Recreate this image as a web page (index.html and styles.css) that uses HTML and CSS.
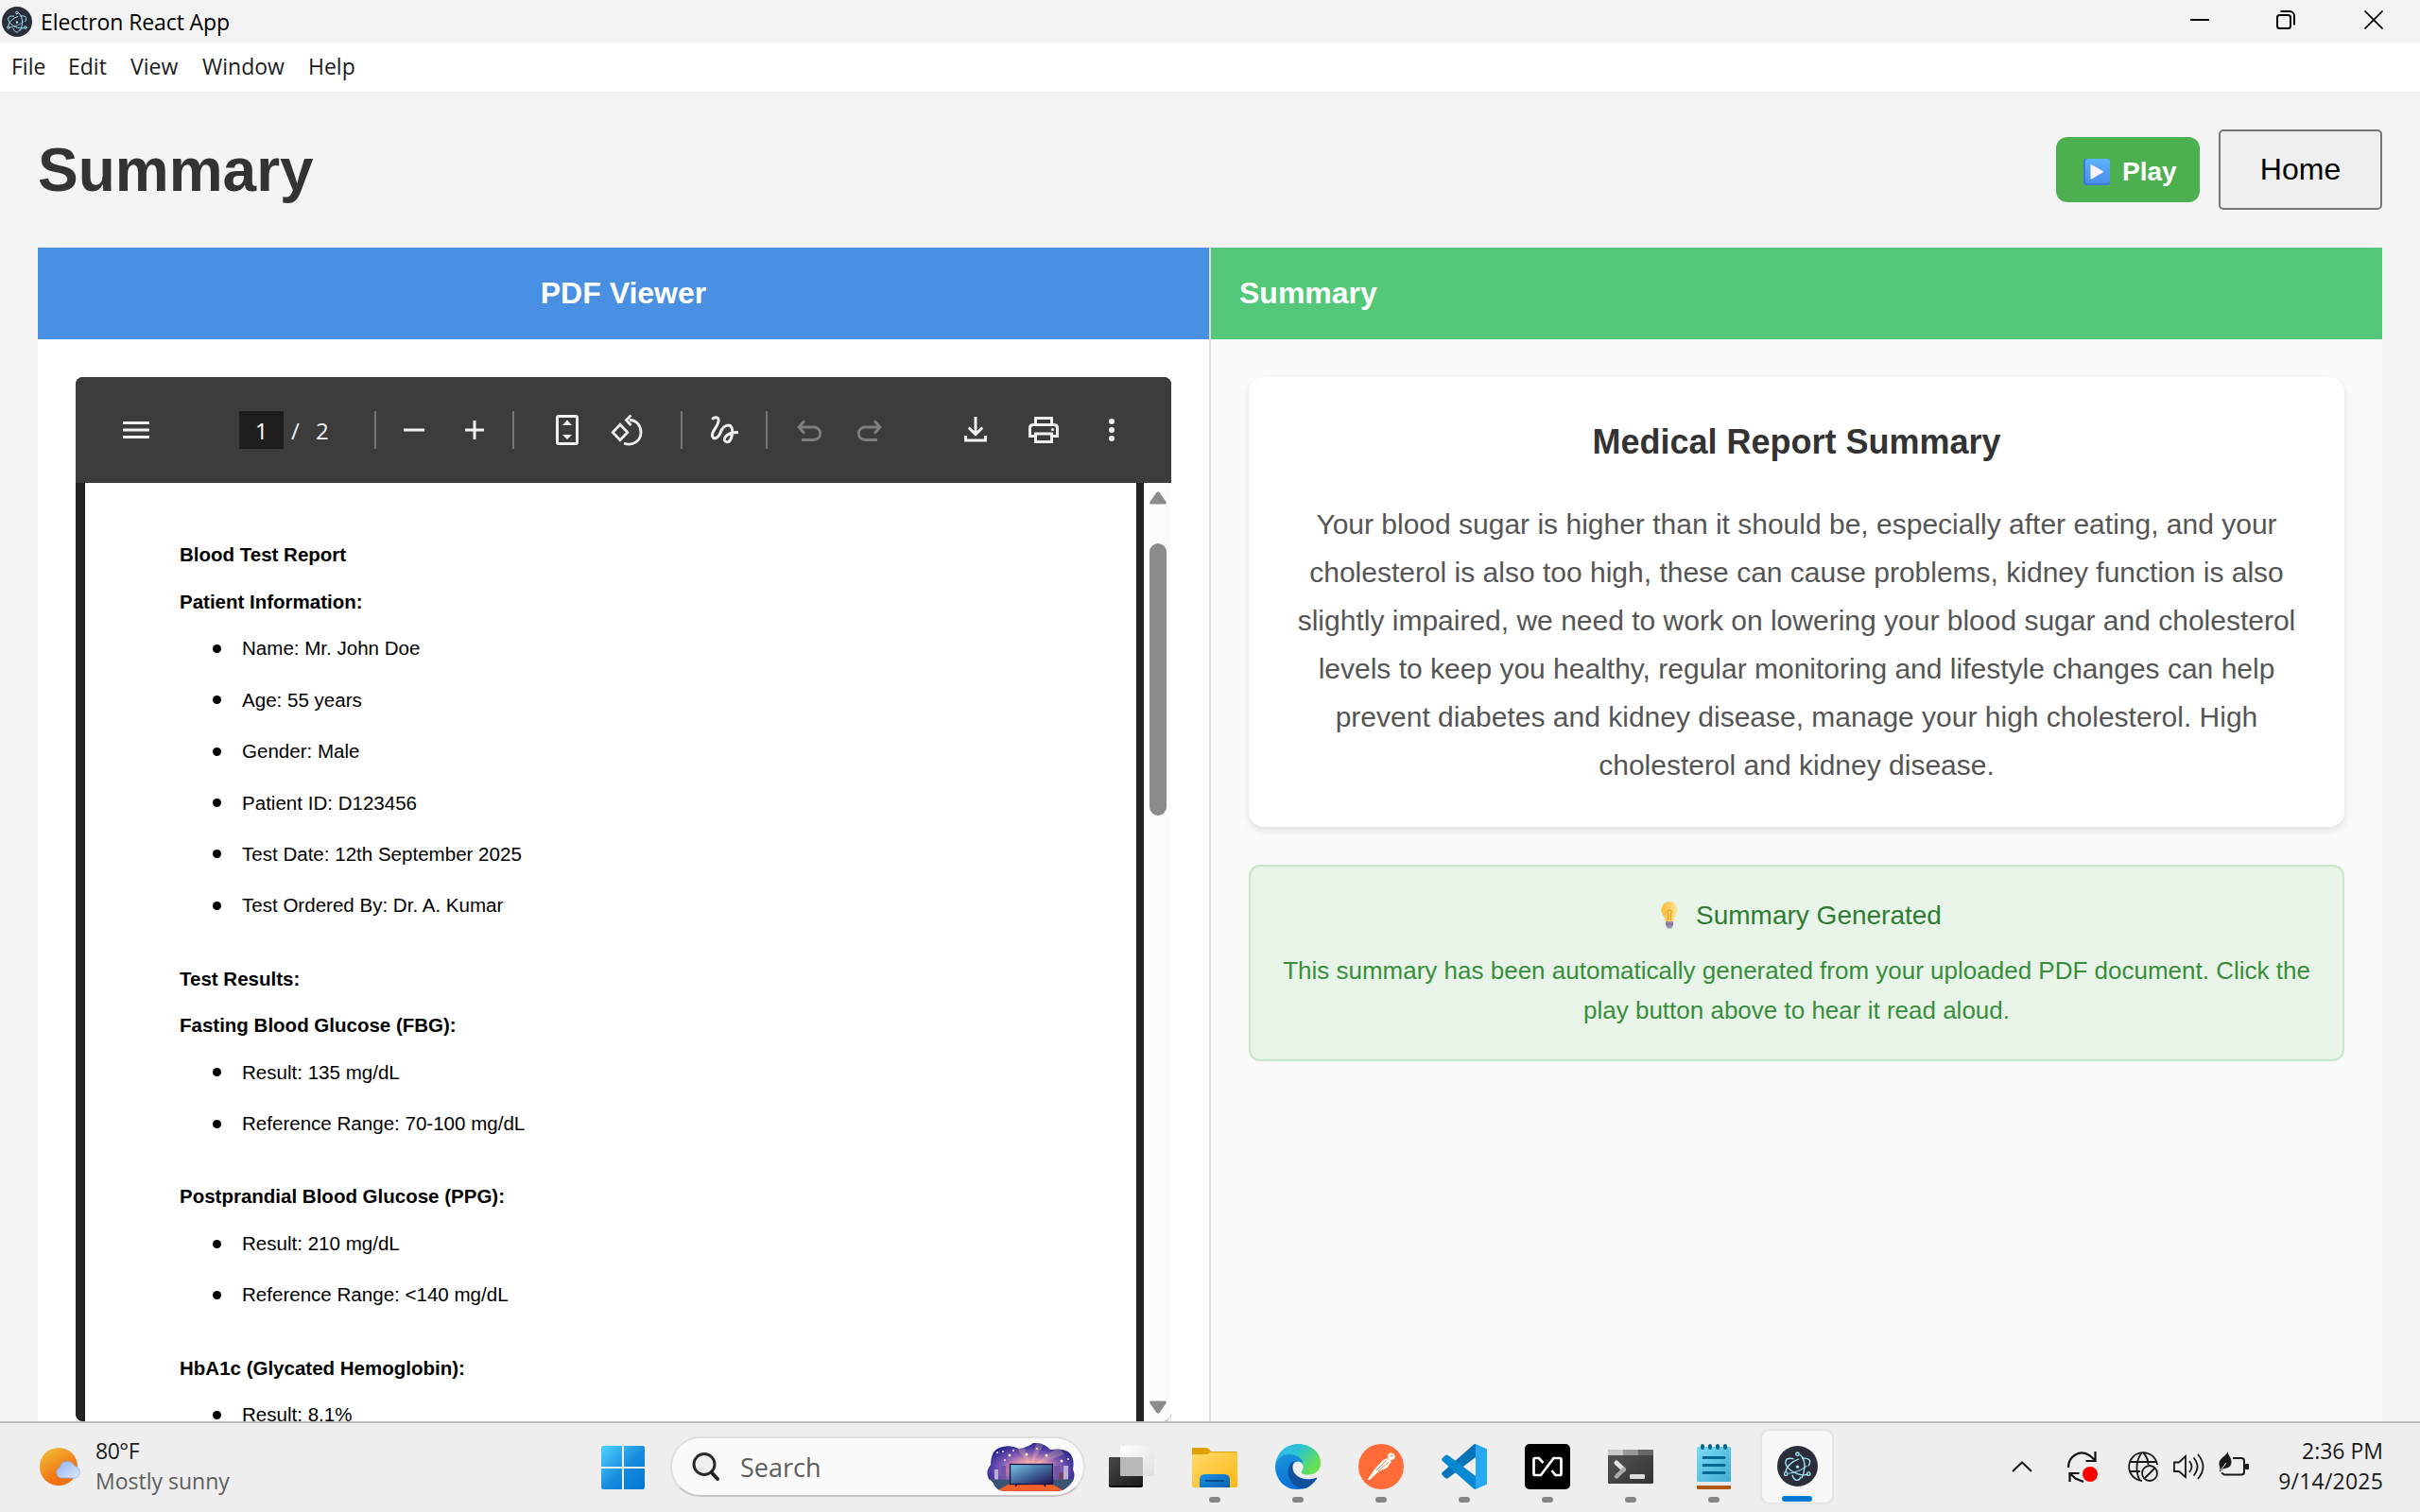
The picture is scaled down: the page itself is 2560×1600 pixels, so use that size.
FILE: index.html
```html
<!DOCTYPE html>
<html lang="en">
<head>
<meta charset="utf-8">
<title>Electron React App</title>
<link rel="stylesheet" href="styles.css">
</head>
<body>
<svg width="0" height="0" class="defs" aria-hidden="true">
  <defs>
    <symbol id="electron" viewBox="0 0 42 42">
      <circle cx="21" cy="21" r="21" fill="#2b2e3a"/>
      <g fill="none" stroke="#9feaf9" stroke-width="1.3" stroke-linecap="round">
        <path d="M24 9.5C27 12 28.5 17 28.2 22.500C28 27 27.200 30 25.500 33M24.200 32.500C22.500 37 17.500 36.500 15.800 30.500"/>
        <path d="M8.800 26.800C9.500 21 16 15.800 22 13.800M26 13C32 12.200 36 14.500 32.500 20.500" />
        <path d="M31.500 29.500C26 31.500 17 28.500 12.200 23.800C6.500 18 7.500 11.500 16.500 13.300"/>
        <path d="M11.800 28.500C17.500 28 26 25 30.300 20.800" stroke-opacity=".75"/>
        <circle cx="21" cy="8.500" r="1.700"/><circle cx="9" cy="29" r="1.700"/><circle cx="32.500" cy="29" r="1.700"/>
      </g>
      <circle cx="21" cy="21.700" r="1.600" fill="#9feaf9"/>
    </symbol>
  </defs>
</svg>

<header class="titlebar">
  <svg class="app-icon" width="32" height="32"><use href="#electron"/></svg>
  <span class="app-name">Electron React App</span>
  <div class="window-controls">
    <svg width="20" height="20"><path d="M0 10h20" stroke="#000" stroke-width="2"/></svg>
    <svg width="20" height="20" fill="none" stroke="#000" stroke-width="2"><rect x="1" y="5" width="14" height="14" rx="2.500"/><path d="M4.500 1H14a5 5 0 0 1 5 5v9.500"/></svg>
    <svg width="20" height="20"><path d="M.5.5l19 19M19.500.5l-19 19" stroke="#000" stroke-width="1.700"/></svg>
  </div>
</header>
<nav class="menubar">
  <span class="m-file">File</span><span class="m-edit">Edit</span><span class="m-view">View</span><span class="m-window">Window</span><span class="m-help">Help</span>
</nav>

<main class="app">
  <div class="page-head">
    <h1>Summary</h1>
    <div class="actions">
      <button class="play">
        <svg width="28" height="28" viewBox="0 0 28 28"><defs><linearGradient id="pl" x2="0" y2="1"><stop stop-color="#5cb4fb"/><stop offset="1" stop-color="#4b8fe8"/></linearGradient></defs><rect width="28" height="28" rx="3" fill="#3f78dd"/><rect x="2" y="0" width="26" height="26" rx="3" fill="url(#pl)"/><path d="M7.500 6.800q0-1 1-.6L20.500 13q1 .8 0 1.600L8.500 21.500q-1 .4-1-.6z" fill="#fdf0ff"/></svg>
        <span>Play</span>
      </button>
      <button class="home">Home</button>
    </div>
  </div>

  <div class="panels">
    <section class="panel pdf-panel">
      <h2 class="panel-title blue">PDF Viewer</h2>
      <div class="panel-body">
        <div class="viewer">
          <div class="toolbar">
            <svg class="t-menu" width="40" height="40"><path d="M6 12.500h28M6 20h28M6 27.500h28" stroke="#f1f1f1" stroke-width="3"/></svg>
            <span class="page-input">1</span><span class="page-slash">/</span><span class="page-total">2</span>
            <i class="sep s1"></i>
            <svg class="t-minus" width="40" height="40"><path d="M9 20h22" stroke="#f1f1f1" stroke-width="3"/></svg>
            <svg class="t-plus" width="40" height="40"><path d="M10 20h20M20 10v20" stroke="#f1f1f1" stroke-width="3"/></svg>
            <i class="sep s2"></i>
            <svg class="t-fit" width="40" height="40"><rect x="9.500" y="5.500" width="21" height="29" rx="1.500" fill="none" stroke="#f1f1f1" stroke-width="3"/><path d="M15 15l5-5.500 5 5.500zM15 25l5 5 5-5z" fill="#f1f1f1"/></svg>
            <svg class="t-rot" width="40" height="40"><g fill="none" stroke="#f1f1f1" stroke-width="2.800"><path d="M5.200 22.500L13 14.300l7.800 8.200L13 30.700z"/><path d="M23 9.500c8 .2 12 6.500 12 13 0 9-8.500 15-18 11.500M24.500 4.500l-5 5 5 5.500"/></g></svg>
            <i class="sep s3"></i>
            <svg class="t-draw" width="40" height="40"><path d="M7.500 9C9 6 15 5.500 14 11C13 17 7 21 7.500 26C8 31 14 29 16.500 22C19 15 26 13 28 17.500C30 23 27.500 33 23 32.800C17.500 32 20 22.500 35 22.500" fill="none" stroke="#f1f1f1" stroke-width="3"/></svg>
            <i class="sep s4"></i>
            <svg class="t-undo" width="40" height="40"><path d="M15 10.500l-6 6.500 6 6.500M9.500 17H25a6.500 6.500 0 0 1 0 13.500H12" fill="none" stroke="#7f7f7f" stroke-width="2.800"/></svg>
            <svg class="t-redo" width="40" height="40"><path d="M25 10.500l6 6.500-6 6.500M30.500 17H15a6.500 6.500 0 0 0 0 13.500H28" fill="none" stroke="#7f7f7f" stroke-width="2.800"/></svg>
            <svg class="t-down" width="40" height="40"><path d="M20 6v18M12.800 17.500l7.200 7.200 7.200-7.200M9.500 26v5h21v-5" fill="none" stroke="#f1f1f1" stroke-width="3"/></svg>
            <svg class="t-print" width="40" height="40"><g fill="none" stroke="#f1f1f1" stroke-width="3"><path d="M11.500 14V7.500h17V14M10.500 26.500h-5V18q0-3.500 3.500-3.500h22q3.500 0 3.500 3.500v8.500h-5"/><path d="M11.500 24h17v8.500h-17z"/></g><circle cx="29.500" cy="19.500" r="1.600" fill="#f1f1f1"/></svg>
            <svg class="t-dots" width="40" height="40" fill="#f1f1f1"><circle cx="20" cy="11" r="3"/><circle cx="20" cy="20" r="3"/><circle cx="20" cy="29" r="3"/></svg>
          </div>
          <div class="viewer-body">
            <article class="document">
              <h3>Blood Test Report</h3>
              <h3 class="next">Patient Information:</h3>
              <ul><li>Name: Mr. John Doe</li><li>Age: 55 years</li><li>Gender: Male</li><li>Patient ID: D123456</li><li>Test Date: 12th September 2025</li><li>Test Ordered By: Dr. A. Kumar</li></ul>
              <h3>Test Results:</h3>
              <h3 class="next">Fasting Blood Glucose (FBG):</h3>
              <ul><li>Result: 135 mg/dL</li><li>Reference Range: 70-100 mg/dL</li></ul>
              <h3>Postprandial Blood Glucose (PPG):</h3>
              <ul><li>Result: 210 mg/dL</li><li>Reference Range: &lt;140 mg/dL</li></ul>
              <h3>HbA1c (Glycated Hemoglobin):</h3>
              <ul><li>Result: 8.1%</li></ul>
            </article>
            <div class="scrollbar">
              <svg width="18" height="14"><path d="M7.500 1q1.500-1.500 3 0l7 10q1 2.500-1 2.500h-15q-2 0-1-2.500z" fill="#8b8b8b"/></svg>
              <i class="thumb"></i>
              <svg class="down" width="18" height="14"><path d="M7.500 13q1.500 1.500 3 0l7-10q1-2.500-1-2.500h-15q-2 0-1 2.500z" fill="#8b8b8b"/></svg>
            </div>
          </div>
        </div>
      </div>
    </section>

    <section class="panel summary-panel">
      <h2 class="panel-title green">Summary</h2>
      <div class="panel-body">
        <div class="card">
          <h3>Medical Report Summary</h3>
          <p>Your blood sugar is higher than it should be, especially after eating, and your<br>cholesterol is also too high, these can cause problems, kidney function is also<br>slightly impaired, we need to work on lowering your blood sugar and cholesterol<br>levels to keep you healthy, regular monitoring and lifestyle changes can help<br>prevent diabetes and kidney disease, manage your high cholesterol. High<br>cholesterol and kidney disease.</p>
        </div>
        <div class="notice">
          <div class="notice-title">
            <svg width="18" height="29" viewBox="0 0 18 29"><defs><linearGradient id="bulb"><stop stop-color="#f9b932"/><stop offset="1" stop-color="#ffe69a"/></linearGradient></defs><path d="M9 0a8.500 8.500 0 0 1 8.500 9c0 5-4 7-4.500 12H5C4.500 16 .5 14 .5 9A8.500 8.500 0 0 1 9 0z" fill="url(#bulb)"/><path d="M7.500 20V13q-2-4 1.500-4t1.500 4v7" fill="none" stroke="#f09d25" stroke-width="1.200"/><path d="M5 21h8v4l-2 3.500H7L5 25z" fill="#a08cae"/><path d="M5 24h8" stroke="#74648a"/></svg>
            <span>Summary Generated</span>
          </div>
          <p>This summary has been automatically generated from your uploaded PDF document. Click the<br>play button above to hear it read aloud.</p>
        </div>
      </div>
    </section>
  </div>
</main>

<footer class="taskbar">
  <div class="weather">
    <svg width="46" height="42" viewBox="0 0 46 42"><defs><linearGradient id="sun" x2=".6" y2="1"><stop stop-color="#f0c43c"/><stop offset=".8" stop-color="#f27010"/></linearGradient><linearGradient id="cl" x2="1" y2="1"><stop stop-color="#8fb2f2"/><stop offset="1" stop-color="#dce9fb"/></linearGradient></defs><circle cx="20" cy="20" r="20" fill="url(#sun)"/><path d="M22 32a6 6 0 0 1-1-11 8.500 8.500 0 0 1 16-1.500A6.500 6.500 0 0 1 38 32z" fill="url(#cl)" stroke="#86a9e6" stroke-width=".7"/></svg>
    <div class="weather-text"><span class="temp">80°F</span><span class="cond">Mostly sunny</span></div>
  </div>
  <svg class="start" width="46" height="46"><defs><linearGradient id="win" gradientUnits="userSpaceOnUse" x2="46" y2="46"><stop stop-color="#4fd3ff"/><stop offset=".55" stop-color="#1689dd"/><stop offset="1" stop-color="#0078d4"/></linearGradient></defs><path d="M2 0h20v22H0V2q0-2 2-2zM24 0h20q2 0 2 2v20H24zM0 24h22v22H2q-2 0-2-2zM24 24h22v20q0 2-2 2H24z" fill="url(#win)"/></svg>
  <div class="search">
    <svg class="lens" width="30" height="32"><circle cx="13" cy="13.500" r="11" fill="#eef0f4" stroke="#2b2b2b" stroke-width="3"/><path d="M20.500 22l6.500 7" stroke="#222" stroke-width="4" stroke-linecap="round"/></svg>
    <span>Search</span>
    <svg class="scene" width="93" height="51" viewBox="0 0 93 51">
      <defs><radialGradient id="sky" cx=".5" cy=".55" r=".6"><stop stop-color="#ffe39c"/><stop offset=".35" stop-color="#d88fb0"/><stop offset=".6" stop-color="#7655b5"/><stop offset="1" stop-color="#131b84"/></radialGradient><linearGradient id="tv" x2="1" y2="1"><stop stop-color="#7cc6e4"/><stop offset=".5" stop-color="#426a9d"/><stop offset="1" stop-color="#21104f"/></linearGradient><clipPath id="blob"><path d="M2 38Q-2 30 4 23Q4 6 17 4Q26 2 34 6Q44 4 49 0Q60-1 67 7Q82 5 88 11Q93 17 91 28Q94 34 91 40Q86 47 80 50Q76 51 70 51H20Q12 51 8 45Q7 41 2 38z"/></clipPath></defs>
      <g clip-path="url(#blob)"><path d="M0 0h93v51H0z" fill="url(#sky)"/><path d="M46 25L28 0h10zM46 25L52 0h9zM46 25L76 4l6 8z" fill="#ffd99a" opacity=".25"/><path d="M8 28h4v11H8zM81 24h5v15h-5z" fill="#bbaed8"/><path d="M15 24h5v15h-5zM71 24h6v15h-6z" fill="#7055a8"/><path d="M76 31h5v8h-5z" fill="#744565"/><path d="M0 38l24 1v6l-12 6H0zM93 38l-24 1v6l12 6h12z" fill="#3c5575"/><path d="M22 44h48l12 7H10z" fill="#f4612c"/></g>
      <path d="M30 46l3-4M62 46l-3-4" stroke="#1b164e" stroke-width="1.500"/><rect x="24.500" y="22.500" width="45" height="21" fill="url(#tv)" stroke="#16113f" stroke-width="1.300"/>
      <g fill="#ffeabf"><circle cx="11" cy="10" r="1"/><circle cx="17" cy="9" r="1"/><circle cx="24" cy="13" r="1.500"/><circle cx="28" cy="8" r="1"/><circle cx="42" cy="12" r="1.500"/><circle cx="53" cy="6" r="1"/><circle cx="63" cy="13" r="1.500"/><circle cx="79" cy="19" r="1.500"/><circle cx="86" cy="17" r="1"/><circle cx="19" cy="18" r="1"/></g>
    </svg>
  </div>
  <div class="tasks">
    <div class="task">
      <svg width="48" height="48"><defs><linearGradient id="tk" x2="1" y2="1"><stop stop-color="#484848"/><stop offset="1" stop-color="#1c1c1c"/></linearGradient><linearGradient id="tl" x2="1" y2="1"><stop stop-color="#fff"/><stop offset="1" stop-color="#dedede"/></linearGradient></defs><rect x="0" y="14" width="36" height="32" rx="2" fill="#050505"/><rect x="0" y="14" width="36" height="30" rx="2" fill="url(#tk)"/><rect x="12" y="2" width="36" height="32" rx="2" fill="url(#tl)"/><path d="M12 14h22q2 0 2 2v18H14q-2 0-2-2z" fill="#b8b8b8"/></svg>
    </div>
    <div class="task">
      <svg width="48" height="48"><defs><linearGradient id="fo" x2="1" y2="1"><stop stop-color="#ffd96b"/><stop offset="1" stop-color="#fcb813"/></linearGradient><linearGradient id="fb" x2="1" y2="1"><stop stop-color="#1c94e2"/><stop offset="1" stop-color="#0561b3"/></linearGradient></defs><path d="M0 5q0-1 1-1h14q2 0 5 4h26q2 0 2 2v6H0z" fill="#dfa000"/><path d="M0 11h15q2 0 4-2h27q2 0 2 2v33q0 2-2 2H2q-2 0-2-2z" fill="url(#fo)"/><path d="M8 46V38q0-6 6-6h20q6 0 6 6v8z" fill="url(#fb)"/><path d="M15 39h18" stroke="#044a8c" stroke-width="2" stroke-linecap="round"/></svg>
      <i></i>
    </div>
    <div class="task">
      <svg width="48" height="48"><defs><linearGradient id="e1" x2="1" y2=".5"><stop stop-color="#35b5f4"/><stop offset=".5" stop-color="#2cc3cf"/><stop offset="1" stop-color="#69e04f"/></linearGradient><linearGradient id="e2" x2=".3" y2="1"><stop stop-color="#1c94dc"/><stop offset="1" stop-color="#0a72d8"/></linearGradient></defs><path d="M0 23C1 9 12 0 24 0c14 0 24 9 24 20 0 8-6 12.500-13 12.500-6 0-8-1.500-7-3.500 2-3 2-5 1-7C26 16 9 11 0 23z" fill="url(#e1)"/><path d="M0 24C1 15 8 11 15 11c9 0 14 6 14 9-9-5-15 5-10 14 4 8 12 12 18 10-5 4-10 4-15 4C10 48 0 37 0 24z" fill="url(#e2)"/><path d="M20 18c-6 3-7 10-6 15 2 9 9 15 18 14 5-2 9-6 12-10 .5-1-.3-1.500-1.300-1C33 40 18 35 18.500 24.500c0-3 .5-5 1.500-6.500z" fill="#10509c"/></svg>
      <i></i>
    </div>
    <div class="task">
      <svg width="48" height="48"><circle cx="24" cy="24" r="24" fill="#ff6c37"/><g fill="#fff"><circle cx="34.800" cy="13.200" r="3.800"/><path d="M31 15l4 3.500-4.500 6.500-10 5-8.500 8h-2.500l8.500-12.500L26 17z"/></g><path d="M30 17L19 28M32 19L21 29M33 13l4-1" stroke="#ff6c37" stroke-width=".9" fill="none"/></svg>
      <i></i>
    </div>
    <div class="task">
      <svg width="48" height="48"><path d="M36 0v14L7 36q-1.500 1-3 0L.8 33q-1.500-1.500 0-3L34 .5z" fill="#0873b6"/><path d="M36 48V34L7 12q-1.500-1-3 0L.8 15q-1.500 1.500 0 3L34 47.500z" fill="#0788d0"/><path d="M36 0l12 5.500v37L36 48z" fill="#26a8f2"/></svg>
      <i></i>
    </div>
    <div class="task">
      <svg width="48" height="48"><rect width="48" height="48" rx="5" fill="#000"/><path d="M19.500 20L15 15h-4q-1.500 0-1.500 1.500v15q0 1.500 1.500 1.500h6L30.500 15H37q1.500 0 1.500 1.500v15q0 1.500-1.500 1.500h-4.500L28.500 28" fill="none" stroke="#fff" stroke-width="2.700"/></svg>
      <i></i>
    </div>
    <div class="task">
      <svg width="48" height="48"><defs><linearGradient id="tm" x2="1" y2="1"><stop stop-color="#555"/><stop offset="1" stop-color="#333"/></linearGradient></defs><rect y="6" width="48" height="36" rx="1.500" fill="url(#tm)"/><path d="M0 12V7.500Q0 6 1.500 6H16v6z" fill="#c9c9c9"/><path d="M16 6h16v6H16z" fill="#979797"/><path d="M32 6h14.500Q48 6 48 7.500V12H32z" fill="#666"/><path d="M9 20l7.500 7" stroke="#e2e2e2" stroke-width="5" stroke-linecap="round"/><path d="M16.500 27L9 34.500" stroke="#aaa" stroke-width="4.500" stroke-linecap="round"/><rect x="23" y="32" width="16" height="5" rx="1" fill="#dcdcdc"/></svg>
      <i></i>
    </div>
    <div class="task">
      <svg width="48" height="48"><defs><linearGradient id="np" x2="1" y2="1"><stop stop-color="#7bdaf6"/><stop offset="1" stop-color="#42acd2"/></linearGradient></defs><rect x="6" y="40" width="36" height="8" rx="1.500" fill="#b1560f"/><path d="M6 38h36v6H6z" fill="#e9e9e9"/><rect x="6" y="3" width="36" height="37" rx="1.500" fill="url(#np)"/><path d="M13 14.500h22M13 22.500h22M13 30.500h22" stroke="#046a91" stroke-width="3" stroke-linecap="round"/><path d="M12 2v2M20 2v2M28 2v2M36 2v2" stroke="#046a91" stroke-width="4" stroke-linecap="round"/></svg>
      <i></i>
    </div>
    <div class="task active">
      <svg width="43" height="43"><use href="#electron"/></svg>
      <i></i>
    </div>
  </div>
  <div class="tray">
    <svg class="chev" width="22" height="12"><path d="M1 11L11 1.500 21 11" fill="none" stroke="#1b1b1b" stroke-width="2"/></svg>
    <svg class="sync" width="34" height="34"><g fill="none" stroke="#111" stroke-width="2.200"><path d="M1 17C1 5 13-3 24 4.500L29 9M29.500 0v10H19.500M2.500 32V23h10M2.500 23l6 5.500L17 32"/></g><circle cx="24" cy="24" r="8" fill="#f00"/></svg>
    <svg class="globe" width="32" height="32"><g fill="none" stroke="#1a1a1a" stroke-width="1.800"><path d="M15 31A15 15 0 1 1 31 14M2 11h28M2 21h11M15 1C8 9 8 23 13 31M16 1c4 4 5.500 8 5.500 13"/><circle cx="23" cy="23" r="8"/><path d="M17.500 28.500l11-11"/></g></svg>
    <svg class="vol" width="34" height="28"><g fill="none" stroke="#1a1a1a" stroke-width="1.800"><path d="M1 9.500h5L13 3v22L6 19H1z"/><path d="M17 8q5 6 0 12M21.500 4.500q8 9.500 0 19M26 1q11 13 0 26"/></g></svg>
    <svg class="batt" width="32" height="28"><path d="M15 7h9q3 0 3 3v11.500q0 3-3 3H6l-3-2" fill="none" stroke="#1a1a1a" stroke-width="2"/><rect x="28" y="13" width="4" height="6" rx="1" fill="#1a1a1a"/><path d="M9.500 0C10 4 13.500 6 13.500 11c0 5-4 7-8.500 7l-4 4C1 20 2 18 1 16-2 7 8 6 9.500 0z" fill="#1a1a1a"/><path d="M2 20L8 12" stroke="#eee" stroke-width="1"/></svg>
    <div class="clock"><span class="time">2:36 PM</span><span class="date">9/14/2025</span></div>
  </div>
</footer>
</body>
</html>
```
FILE: styles.css
```css
* { box-sizing: border-box; }
html, body { margin: 0; height: 100%; }
body {
  display: flex;
  flex-direction: column;
  height: 1600px;
  overflow: hidden;
  background: #f4f4f4;
  font-family: "Liberation Sans", Arial, sans-serif;
}
h1, h2, h3, p, ul { margin: 0; padding: 0; }
svg { display: block; flex: none; }
.defs { position: absolute; }

.titlebar, .menubar, .taskbar, .page-input, .page-slash, .page-total {
  font-family: "Open Sans", "Noto Sans", sans-serif;
}
.titlebar {
  display: flex;
  align-items: center;
  flex: none;
  height: 45px;
  padding: 0 39px 0 2px;
  background: #f3f3f3;
}
.app-name { margin-left: 9px; padding-top: 1px; font-size: 23px; letter-spacing: -0.1px; color: #000; }
.window-controls { display: flex; gap: 72px; margin-left: auto; padding-bottom: 3px; }
.window-controls svg:nth-child(2) { margin: 0 1px 0 -1px; }
.menubar {
  display: flex;
  align-items: center;
  flex: none;
  height: 52px;
  padding: 0 0 2px 12px;
  background: #fff;
  font-size: 23px;
  letter-spacing: 0;
  color: #1b1b1b;
}
.menubar span { white-space: nowrap; }
.m-file { width: 60px; }
.m-edit { width: 66px; }
.m-view { width: 76px; }
.m-window { width: 112px; }

.app { display: flex; flex-direction: column; flex: 1; min-height: 0; padding: 40px 40px 0; }
.page-head { display: flex; justify-content: space-between; align-items: center; height: 85px; margin-bottom: 40px; flex: none; }
h1 { font-size: 64px; line-height: 74px; color: #333; }
.actions { display: flex; align-items: center; gap: 20px; }
button { font-family: inherit; margin: 0; }
.play {
  display: flex; align-items: center; gap: 13px;
  width: 152px; height: 69px; padding: 4px 0 0 29px;
  border: 0; border-radius: 12px; background: #4caf50;
  color: #fff; font-size: 28px; font-weight: bold;
}
.home { width: 173px; height: 85px; border: 2px solid #767676; border-radius: 5px; background: #efefef; color: #000; font-size: 32px; }

.panels { display: grid; grid-template-columns: 1241px 1239px; flex: 1; min-height: 0; }
.panel { display: flex; flex-direction: column; min-height: 0; }
.pdf-panel { border-right: 2px solid #ddd; background: #fff; }
.summary-panel { background: #fafafa; }
.panel-title { flex: none; height: 97px; padding: 30px; font-size: 32px; line-height: 37px; color: #fff; }
.blue { background: #4a90e2; text-align: center; }
.green { background: #52c878; }
.panel-body { display: flex; flex-direction: column; flex: 1; min-height: 0; padding: 40px 40px 0; }

.viewer { display: flex; flex-direction: column; flex: 1; min-height: 0; border-radius: 8px; overflow: hidden; background: #262626; }
.toolbar { display: flex; align-items: center; flex: none; height: 112px; background: #3c3c3c; color: #f1f1f1; font-size: 24px; }
.t-menu { margin-left: 44px; }
.page-input { width: 47px; height: 40px; margin-left: 89px; background: #1e1e1e; line-height: 41px; text-align: center; color: #fff; }
.page-slash { margin-left: 8px; width: 26px; }
.page-total { width: 14px; }
.sep { width: 2px; height: 40px; background: #757575; }
.s1 { margin-left: 48px; }
.t-minus { margin-left: 20px; }
.t-plus { margin-left: 24px; }
.s2 { margin-left: 20px; }
.t-fit { margin-left: 36px; }
.t-rot { margin-left: 23px; }
.s3 { margin-left: 37px; }
.t-draw { margin-left: 24px; }
.s4 { margin-left: 24px; }
.t-undo { margin-left: 24px; }
.t-redo { margin-left: 24px; }
.t-down { margin-left: 72px; }
.t-print, .t-dots { margin-left: 32px; }
.viewer-body { display: flex; flex: 1; min-height: 0; padding-left: 10px; background: #222; }
.document { width: 1112px; margin-right: 8px; padding: 53px 0 0 100px; background: #fff; overflow: hidden; color: #000; font-size: 20.55px; }
.document h3 { height: 45.4px; line-height: 45.4px; font-size: 20.5px; }
.document h3.next { margin-top: 4.4px; }
.document ul { list-style: none; margin-bottom: 27px; }
.document li { display: flex; align-items: center; gap: 22px; height: 54.4px; padding-left: 35px; }
.document li::before { content: ""; width: 9px; height: 9px; border-radius: 50%; background: #000; }
.scrollbar { display: flex; flex-direction: column; align-items: center; flex: 1; padding: 9px 0 8px; background: #fcfcfc; }
.thumb { width: 18px; height: 288px; margin-top: 41px; border-radius: 9px; background: #8b8b8b; }
.down { margin-top: auto; }

.card { height: 476px; padding-top: 48px; border-radius: 16px; background: #fff; box-shadow: 0 4px 8px rgba(0,0,0,.1); text-align: center; }
.card h3 { font-size: 36px; line-height: 41px; color: #333; }
.card p { margin-top: 41px; font-size: 30px; line-height: 51px; color: #555; white-space: nowrap; }
.notice { height: 208px; margin-top: 40px; padding-top: 35px; border: 2px solid #c8e6c9; border-radius: 12px; background: #e8f4e8; text-align: center; }
.notice-title { display: flex; justify-content: center; align-items: center; gap: 19px; height: 33px; padding-left: 10px; font-size: 28px; color: #2e7d32; }
.notice p { margin-top: 21px; font-size: 26px; line-height: 42px; color: #388e3c; white-space: nowrap; }

.taskbar { display: flex; align-items: center; flex: none; height: 96px; border-top: 2px solid #bdbdbd; background: #eee; }
.weather { display: flex; width: 636px; padding-left: 42px; gap: 13px; align-items: center; }
.weather-text, .clock { display: flex; flex-direction: column; padding-bottom: 4px; font-size: 23px; line-height: 32px; color: #1b1b1b; white-space: nowrap; }
.temp { letter-spacing: -0.5px; }
.weather-text .cond { color: #5d5d5d; }
.search { display: flex; align-items: center; width: 439px; height: 64px; margin: -2px 0 0 27px; padding: 0 9px 0 21px; border: 2px solid #e0e0e0; border-bottom-color: #c6c6c6; border-radius: 32px; background: #fafafa; }
.search span { margin-left: 21px; font-size: 27px; color: #5d5d5d; }
.scene { margin-left: auto; }
.tasks { display: flex; margin-left: 5px; }
.task { display: flex; flex-direction: column; align-items: center; width: 88px; height: 80px; margin-top: -2px; padding-top: 16px; }
.task i { width: 12px; height: 6px; margin-top: 8px; border-radius: 3px; background: #868686; }
.active { width: 78px; margin-left: 5px; padding-top: 16px; border: 2px solid #e5e5e5; border-radius: 10px; background: #f7f7f7; }
.active i { width: 32px; margin-top: 10px; background: #0078d4; }
.tray { display: flex; align-items: center; flex: 1; margin-left: 188px; }
.chev { margin-top: -2px; }
.sync { margin-left: 37px; }
.globe { margin-left: 30px; margin-top: -2px; }
.vol { margin-left: 16px; margin-top: -2px; }
.batt { margin-left: 14px; margin-top: -6px; }
.clock { margin-left: auto; padding-right: 39px; align-items: flex-end; }
.date { letter-spacing: 0.2px; }
```
